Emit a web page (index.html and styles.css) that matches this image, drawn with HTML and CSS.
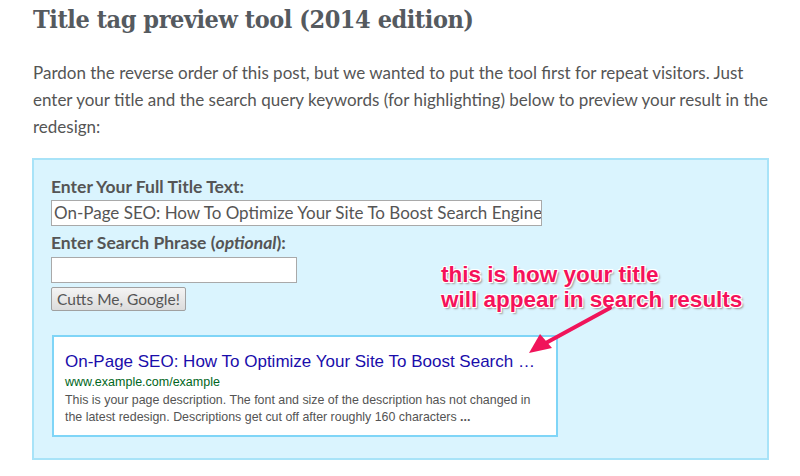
FILE: index.html
```html
<!DOCTYPE html>
<html>
<head>
<meta charset="utf-8">
<link rel="stylesheet" href="styles.css">
</head>
<body>
<div class="page">
  <h1 class="title">Title tag preview tool (2014 edition)</h1>
  <p class="intro">Pardon the reverse order of this post, but we wanted to put the tool first for repeat visitors. Just enter your title and the search query keywords (for highlighting) below to preview your result in the redesign:</p>
  <div class="tool">
    <div class="form">
      <label class="label">Enter Your Full Title Text:</label>
      <div class="input wide">On-Page SEO: How To Optimize Your Site To Boost Search Engine</div>
      <label class="label second">Enter Search Phrase (<em>optional</em>):</label>
      <div class="input narrow"></div>
      <div class="button">Cutts Me, Google!</div>
    </div>
    <div class="result">
      <div class="r-title">On-Page SEO: How To Optimize Your Site To Boost Search …</div>
      <div class="r-url">www.example.com/example</div>
      <div class="r-desc">This is your page description. The font and size of the description has not changed in the latest redesign. Descriptions get cut off after roughly 160 characters <b>...</b></div>
    </div>
    <div class="note">this is how your title<br>will appear in search results</div>
    <svg class="arrow" width="100" height="60" viewBox="0 0 100 60">
      <path d="M88 4 L22 40" stroke="#f0145a" stroke-width="4" stroke-linecap="round" fill="none"/>
      <path d="M7 49 L18 30 L30 44 Z" fill="#f0145a"/>
    </svg>
  </div>
</div>
</body>
</html>
```
FILE: styles.css
```css
html, body { margin: 0; padding: 0; background: #fff; }
.page { width: 736px; padding: 0 0 0 33px; }
.title {
  font-family: "DejaVu Serif", serif;
  font-stretch: condensed;
  font-weight: bold;
  font-size: 25px;
  letter-spacing: -0.45px;
  color: #555a5f;
  margin: 0;
  padding-top: 3px;
  line-height: 34px;
}
.intro {
  width: 736px;
  font-family: Lato, sans-serif;
  font-size: 17px;
  line-height: 27px;
  color: #555;
  margin: 22px 0 0 0;
}
.tool {
  position: relative;
  margin: 18px 0 0 -1px;
  width: 733px;
  height: 298px;
  background: #daf4fe;
  border: 2px solid #a8e3f8;
}
.form { padding: 16px 0 0 17px; display: flex; flex-direction: column; align-items: flex-start; }
.label {
  font-family: Lato, sans-serif;
  font-weight: bold;
  font-size: 17.5px;
  line-height: 22px;
  color: #555;
}
.label em { font-style: italic; }
.second { margin-top: 6px; }
.input {
  background: #fff;
  border: 1px solid #a9a9a9;
  height: 26px;
  box-sizing: border-box;
  font-family: Lato, sans-serif;
  font-size: 17px;
  line-height: 24px;
  color: #555;
  padding-left: 2px;
  overflow: hidden;
  white-space: nowrap;
}
.wide { width: 491px; margin-top: 2px; }
.narrow { width: 246px; margin-top: 3px; }
.button {
  margin-top: 4px;
  font-family: Lato, sans-serif;
  font-size: 15.5px;
  color: #555;
  border: 1px solid #a0a0a0;
  border-radius: 2px;
  background: linear-gradient(#f4f4f4, #dcdcdc);
  padding: 0 5px;
  height: 24px;
  line-height: 22px;
  box-sizing: border-box;
}
.result {
  margin: 24px 0 0 18px;
  width: 506px;
  height: 102px;
  box-sizing: border-box;
  background: #fff;
  border: 2px solid #7fd5f7;
  padding: 14px 0 0 11px;
  font-family: "Liberation Sans", Arial, sans-serif;
}
.r-title { color: #1a0dab; font-size: 17px; line-height: 22px; white-space: nowrap; }
.r-url { color: #006621; font-size: 12.5px; line-height: 16px; margin-top: 1px; }
.r-desc { color: #545454; font-size: 12.4px; line-height: 17px; width: 480px; margin-top: 2px; }
.note {
  position: absolute;
  left: 407px;
  top: 102px;
  font-family: "Liberation Sans", Arial, sans-serif;
  font-weight: bold;
  font-size: 22.5px;
  line-height: 25px;
  color: #f5125a;
  text-shadow: -1px -1px 0 #fff, 1px -1px 0 #fff, -1px 1px 0 #fff, 1px 1px 0 #fff, 0 -1px 0 #fff, 0 1px 0 #fff, 2px 2px 2px #999;
}
.arrow { position: absolute; left: 488px; top: 144px; }
```
